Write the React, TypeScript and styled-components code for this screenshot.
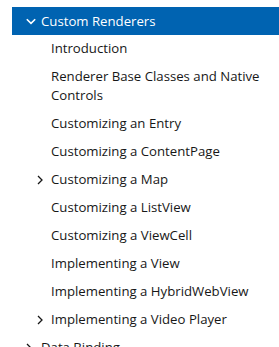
import React from 'react';
import styled, { createGlobalStyle } from 'styled-components';

const GlobalStyle = createGlobalStyle`
  html, body {
    margin: 0;
    padding: 0;
    background: #ffffff;
    overflow: hidden;
  }
  body {
    font-family: "Open Sans", "Noto Sans", sans-serif;
  }
`;

const Tree = styled.nav`
  padding-top: 7px;
  padding-left: 12px;
  width: 267px;
`;

const Header = styled.div`
  display: flex;
  align-items: center;
  height: 28px;
  background: #0063b1;
  color: #ffffff;
  font-size: 13.2px;
  padding-left: 13px;
  box-sizing: border-box;
`;

const List = styled.ul`
  list-style: none;
  margin: 0;
  padding: 0;
`;

const Item = styled.li<{ $depth: number }>`
  display: flex;
  align-items: flex-start;
  padding: 4px 8px 5px ${(p) => (p.$depth === 0 ? 13 : 24)}px;
  font-size: 13.2px;
  line-height: 19px;
  color: #171717;
`;

const Chevron = styled.span<{ $wide?: boolean }>`
  display: inline-flex;
  align-items: center;
  width: ${(p) => (p.$wide ? 16 : 15)}px;
  height: 19px;
  flex: none;
  svg {
    display: block;
    margin-left: 1px;
  }
`;

const Label = styled.span`
  flex: 1;
`;

const ChevronDown = ({ color }: { color: string }) => (
  <svg width="10" height="7" viewBox="0 0 10 7">
    <path d="M0.8 1.2 L5 5.4 L9.2 1.2" fill="none" stroke={color} strokeWidth="1.6" />
  </svg>
);

const ChevronRight = () => (
  <svg width="6" height="10" viewBox="0 0 6 10">
    <path d="M1 1 L5 5 L1 9" fill="none" stroke="#171717" strokeWidth="1.3" />
  </svg>
);

interface Entry {
  title: string;
  children?: boolean;
}

const entries: Entry[] = [
  { title: 'Introduction' },
  { title: 'Renderer Base Classes and Native Controls' },
  { title: 'Customizing an Entry' },
  { title: 'Customizing a ContentPage' },
  { title: 'Customizing a Map', children: true },
  { title: 'Customizing a ListView' },
  { title: 'Customizing a ViewCell' },
  { title: 'Implementing a View' },
  { title: 'Implementing a HybridWebView' },
  { title: 'Implementing a Video Player', children: true },
];

const App: React.FC = () => (
  <>
    <GlobalStyle />
    <Tree>
      <Header>
        <Chevron $wide>
          <ChevronDown color="#ffffff" />
        </Chevron>
        <Label>Custom Renderers</Label>
      </Header>
      <List>
        {entries.map((entry, index) => (
          <Item key={`entry_${index}`} $depth={1}>
            <Chevron>{entry.children && <ChevronRight />}</Chevron>
            <Label>{entry.title}</Label>
          </Item>
        ))}
      </List>
      <Item as="div" $depth={0}>
        <Chevron $wide>
          <ChevronRight />
        </Chevron>
        <Label>Data Binding</Label>
      </Item>
    </Tree>
  </>
);

export default App;
